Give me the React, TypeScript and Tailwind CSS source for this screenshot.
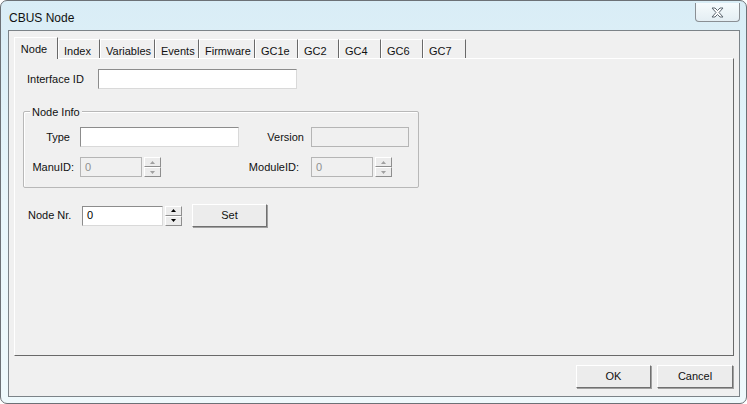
import React from 'react';

const font = { fontFamily: '"Liberation Sans", Arial, sans-serif' };

function Spinner({ disabled }: { disabled?: boolean }) {
  const arrow = disabled ? '#a0a0a0' : '#000';
  const btn =
    'w-[17px] h-[10px] bg-[#ececec] border border-t-white border-l-white border-r-[#8e8e8e] border-b-[#8e8e8e] flex items-center justify-center';
  return (
    <div className="flex flex-col">
      <div className={btn}>
        <svg width="5" height="3" viewBox="0 0 5 3">
          <path d="M2.5 0 L5 3 L0 3 Z" fill={arrow} />
        </svg>
      </div>
      <div className={btn}>
        <svg width="5" height="3" viewBox="0 0 5 3">
          <path d="M0 0 L5 0 L2.5 3 Z" fill={arrow} />
        </svg>
      </div>
    </div>
  );
}

function Field({ w, disabled, value }: { w: string; disabled?: boolean; value?: string }) {
  return (
    <div
      className={`${w} h-[20px] border flex items-center pl-[4px] ${
        disabled
          ? 'bg-[#f0f0f0] border-[#b5b5b5] text-[#8f8f8f]'
          : 'bg-white border-t-[#8c8c8c] border-l-[#8c8c8c] border-r-[#d9d9d9] border-b-[#d9d9d9] text-black'
      }`}
    >
      {value}
    </div>
  );
}

function Button({ label, w }: { label: string; w: string }) {
  return (
    <div
      className={`${w} h-[23px] bg-[#ececec] border border-t-white border-l-white border-r-[#707070] border-b-[#707070] shadow-[1px_1px_0_#a0a0a0] flex items-center justify-center`}
    >
      {label}
    </div>
  );
}

const tabs = [
  { name: 'Node', w: 'w-[44px]' },
  { name: 'Index', w: 'w-[42px]' },
  { name: 'Variables', w: 'w-[55px]' },
  { name: 'Events', w: 'w-[44px]' },
  { name: 'Firmware', w: 'w-[56px]' },
  { name: 'GC1e', w: 'w-[43px]' },
  { name: 'GC2', w: 'w-[41px]' },
  { name: 'GC4', w: 'w-[42px]' },
  { name: 'GC6', w: 'w-[42px]' },
  { name: 'GC7', w: 'w-[43px]' },
];

export default function App() {
  return (
    <div className="w-[747px] h-[404px] bg-white text-[11px] text-[#111]" style={font}>
      <div className="w-full h-full rounded-[7px] border border-[#6c7176] bg-gradient-to-b from-[#d9edf6] via-[#e8f6fb] to-[#eff9fc] flex flex-col">
        {/* title bar */}
        <div className="h-[29px] flex items-start justify-between pl-[8px] pr-[6px]">
          <span className="text-[12px] mt-[8px]">CBUS Node</span>
          <div className="mt-[2px] w-[45px] h-[19px] rounded-b-[4px] border border-t-0 border-[#8a8f94] bg-gradient-to-b from-[#f6fbfd] to-[#e4eef3] flex items-center justify-center">
            <svg width="13" height="11" viewBox="0 0 13 11">
              <path
                d="M1 1 L4 1 L6.5 3.5 L9 1 L12 1 L8 5.5 L12 10 L9 10 L6.5 7.5 L4 10 L1 10 L5 5.5 Z"
                fill="#fff"
                stroke="#5c6670"
                strokeWidth="1"
              />
            </svg>
          </div>
        </div>

        {/* client area */}
        <div className="flex-1 ml-[7px] mr-[6px] mb-[6px] border border-[#7c8388] bg-[#f0f0f0] flex flex-col pl-[5px] pr-[5px] pt-[6px]">
          {/* tabs */}
          <div className="flex items-end h-[21px] relative z-10">
            {tabs.map((t, i) =>
              i === 0 ? (
                <div
                  key={t.name}
                  className={`${t.w} h-[22px] -mb-[1px] bg-[#f0f0f0] border border-b-0 border-t-white border-l-white border-r-[#696969] flex items-start justify-center pt-[3px] pr-[4px]`}
                >
                  {t.name}
                </div>
              ) : (
                <div
                  key={t.name}
                  className={`${t.w} h-[19px] bg-[#f0f0f0] border border-b-0 border-t-white border-l-white border-r-[#696969] flex items-start pl-[5px] pt-[3px]`}
                >
                  {t.name}
                </div>
              )
            )}
          </div>

          {/* panel */}
          <div className="h-[298px] border border-t-white border-l-white border-r-[#696969] border-b-[#696969] flex flex-col">
            <div className="flex items-center mt-[10px] ml-[12px]">
              <span className="w-[71px]">Interface ID</span>
              <Field w="w-[199px]" />
            </div>

            {/* Node Info group */}
            <div className="relative ml-[8px] mt-[22px] w-[396px] h-[77px] border border-[#b8b8b8] rounded-[2px] shadow-[inset_1px_1px_0_#fff]">
              <span className="absolute -top-[8px] left-[6px] px-[2px] bg-[#f0f0f0]">Node Info</span>
              <div className="flex items-center mt-[15px]">
                <span className="w-[56px] text-right pr-[10px]">Type</span>
                <Field w="w-[159px]" />
                <span className="w-[72px] text-right pr-[7px]">Version</span>
                <Field w="w-[98px]" disabled />
              </div>
              <div className="flex items-center mt-[10px]">
                <span className="w-[56px] text-right pr-[6px]">ManuID:</span>
                <Field w="w-[62px]" disabled value="0" />
                <div className="ml-[2px]">
                  <Spinner disabled />
                </div>
                <span className="w-[150px] text-right pr-[12px]">ModuleID:</span>
                <Field w="w-[62px]" disabled value="0" />
                <div className="ml-[2px]">
                  <Spinner disabled />
                </div>
              </div>
            </div>

            <div className="flex items-center mt-[16px] ml-[13px]">
              <span className="w-[54px]">Node Nr.</span>
              <Field w="w-[81px]" value="0" />
              <div className="ml-[2px]">
                <Spinner />
              </div>
              <div className="ml-[10px]">
                <Button label="Set" w="w-[75px]" />
              </div>
            </div>
          </div>

          {/* dialog buttons */}
          <div className="flex justify-end gap-[6px] mt-[9px] pr-[1px]">
            <Button label="OK" w="w-[75px]" />
            <Button label="Cancel" w="w-[76px]" />
          </div>
        </div>
      </div>
    </div>
  );
}
